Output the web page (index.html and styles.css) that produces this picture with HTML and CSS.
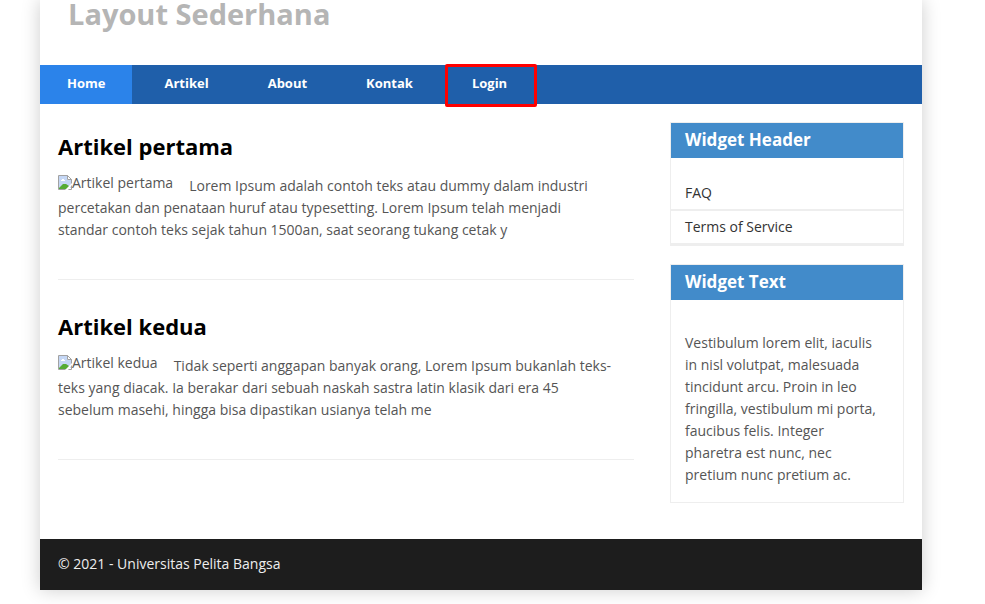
FILE: index.html
```html
<!DOCTYPE html>
<html lang="id">
<head>
<meta charset="utf-8">
<title>Layout Sederhana</title>
<link rel="stylesheet" href="styles.css">
</head>
<body>
<svg class="sprite" aria-hidden="true">
  <symbol id="missing" viewBox="0 0 14 15">
    <path d="M.5.5h9l4 4v10H.5z" fill="#fff" stroke="#a2a2a2"/>
    <path d="M1 1h8v4h4v8H1z" fill="#c5d7f5"/>
    <path d="M3 6V5h1V4h2v1h1v1z" fill="#fff"/>
    <path d="M1 14v-1l4-4h3l3 2v3z" fill="#55ab35"/>
    <path d="M9.5.5v4h4z" fill="#fff" stroke="#a2a2a2"/>
    <path d="M14 8v2l-4 5H7l4-4z" fill="#fff"/>
  </symbol>
</svg>
<div class="container">
  <header class="header">
    <h1>Layout Sederhana</h1>
  </header>
  <nav class="nav">
    <a class="active" href="#home">Home</a>
    <a href="#artikel">Artikel</a>
    <a href="#about">About</a>
    <a href="#kontak">Kontak</a>
    <a class="marked" href="#login">Login</a>
  </nav>
  <div class="wrapper">
    <main>
      <article class="entry">
        <h2>Artikel pertama</h2>
        <span class="thumb"><svg><use href="#missing"/></svg>Artikel pertama</span>
        <p>Lorem Ipsum adalah contoh teks atau dummy dalam industri percetakan dan penataan huruf atau typesetting. Lorem Ipsum telah menjadi standar contoh teks sejak tahun 1500an, saat seorang tukang cetak y</p>
      </article>
      <article class="entry">
        <h2>Artikel kedua</h2>
        <span class="thumb"><svg><use href="#missing"/></svg>Artikel kedua</span>
        <p>Tidak seperti anggapan banyak orang, Lorem Ipsum bukanlah teks-teks yang diacak. Ia berakar dari sebuah naskah sastra latin klasik dari era 45 sebelum masehi, hingga bisa dipastikan usianya telah me</p>
      </article>
    </main>
    <aside class="sidebar">
      <section class="widget">
        <h3>Widget Header</h3>
        <ul>
          <li><a href="#faq">FAQ</a></li>
          <li><a href="#terms">Terms of Service</a></li>
        </ul>
      </section>
      <section class="widget">
        <h3>Widget Text</h3>
        <p>Vestibulum lorem elit, iaculis in nisl volutpat, malesuada tincidunt arcu. Proin in leo fringilla, vestibulum mi porta, faucibus felis. Integer pharetra est nunc, nec pretium nunc pretium ac.</p>
      </section>
    </aside>
  </div>
  <footer class="footer">© 2021 - Universitas Pelita Bangsa</footer>
</div>
</body>
</html>
```
FILE: styles.css
```css
* {
  box-sizing: border-box;
  margin: 0;
  padding: 0;
}

body {
  background: #fff;
  color: #555;
  font: 14px/22px "Open Sans", sans-serif;
}

a {
  color: inherit;
  text-decoration: none;
}

.sprite {
  display: none;
}

.container {
  margin: 0 63px 14px 40px;
  background: #fff;
  box-shadow: 0 0 18px rgba(0, 0, 0, 0.2);
}

.header {
  padding: 0 28px 37px;
}

.header h1 {
  color: #b5b5b5;
  font-size: 29px;
  line-height: 28px;
}

.nav {
  display: flex;
  gap: 5px;
  background: #1f5faa;
}

.nav a {
  position: relative;
  padding: 7px 27px 10px;
  color: #fff;
  font-size: 13px;
  font-weight: bold;
}

.nav .active {
  background: #2b83ea;
}

.nav .marked::after {
  content: "";
  position: absolute;
  inset: -1px -3px -3px 0;
  border: 3px solid #f00;
  border-radius: 2px;
}

.wrapper {
  display: grid;
  grid-template-columns: 1fr 234px;
  gap: 36px;
  padding: 18px 18px 36px;
}

.entry {
  padding: 10px 0 38px;
  border-bottom: 1px solid #eee;
}

.entry + .entry {
  padding-top: 32px;
}

.entry h2 {
  margin-bottom: 15px;
  color: #000;
  font-size: 22px;
  line-height: 28px;
}

.entry p {
  padding-right: 22px;
}

.thumb {
  display: flex;
  align-items: center;
  float: left;
  height: 15px;
  margin-right: 16px;
}

.thumb svg {
  width: 14px;
  height: 15px;
}

.widget {
  margin-bottom: 18px;
  border: 1px solid #eee;
}

.widget:last-child {
  margin-bottom: 0;
}

.widget h3 {
  padding: 0 14px 1px;
  background: #428bca;
  color: #fff;
  font-size: 17px;
  line-height: 34px;
}

.widget ul {
  padding-top: 19px;
  list-style: none;
}

.widget li {
  padding: 5px 14px;
  border-bottom: 2px solid #eee;
  color: #333;
}

.widget p {
  padding: 32px 22px 16px 14px;
}

.footer {
  padding: 14px 18px 15px;
  background: #1d1d1d;
  color: #eee;
}
```
